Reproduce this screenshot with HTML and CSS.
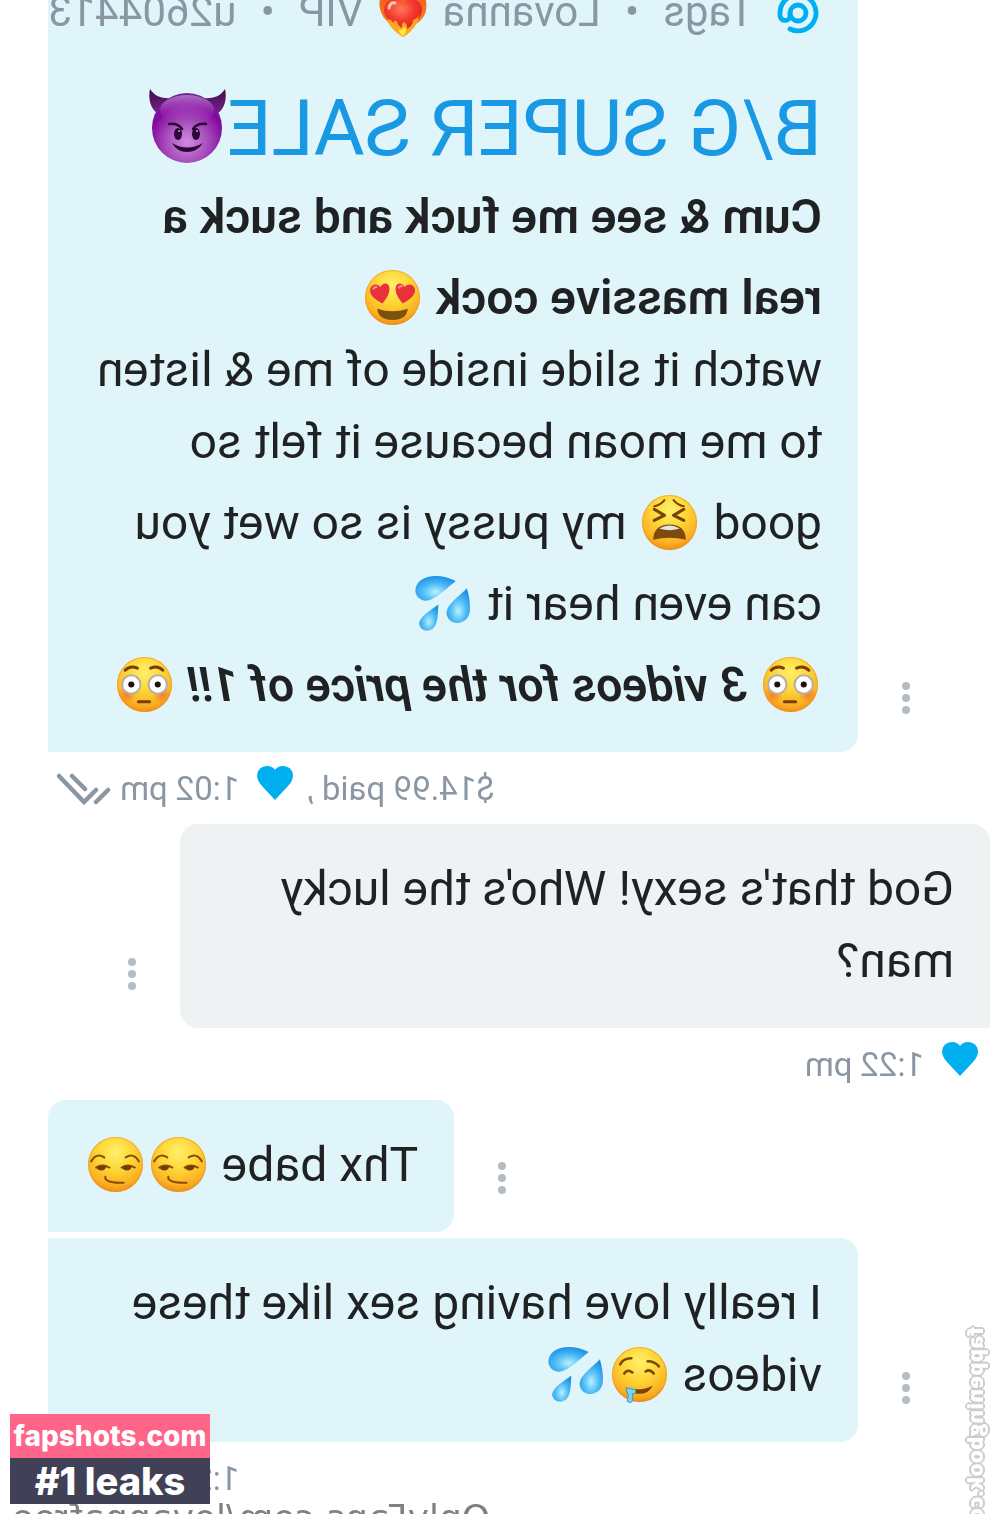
FILE: index.html
```html
<!DOCTYPE html>
<html lang="en">
<head>
<meta charset="utf-8">
<meta name="viewport" content="width=device-width, initial-scale=1">
<title>Messages</title>
<link rel="stylesheet" href="styles.css">
</head>
<body>
<svg class="sprite" aria-hidden="true">
  <defs>
    <radialGradient id="skin" cx="50%" cy="28%" r="74%">
      <stop offset="0" stop-color="#fff06a"/><stop offset=".45" stop-color="#fed535"/><stop offset=".8" stop-color="#fbb023"/><stop offset="1" stop-color="#ee8a17"/>
    </radialGradient>
    <radialGradient id="purple" cx="50%" cy="70%" r="72%">
      <stop offset="0" stop-color="#cf8be0"/><stop offset=".4" stop-color="#a850bd"/><stop offset=".75" stop-color="#84089f"/><stop offset="1" stop-color="#6b2b91"/>
    </radialGradient>
    <linearGradient id="shine" x1="0" y1="0" x2="0" y2="1">
      <stop offset="0" stop-color="#d7a0e4" stop-opacity=".6"/><stop offset="1" stop-color="#a03cb8" stop-opacity="0"/>
    </linearGradient>
    <linearGradient id="horn" x1="0" y1="0" x2="0" y2="1">
      <stop offset="0" stop-color="#3d0f49"/><stop offset="1" stop-color="#74208a"/>
    </linearGradient>
    <radialGradient id="water" cx="50%" cy="65%" r="65%">
      <stop offset="0" stop-color="#b9f0ff"/><stop offset=".5" stop-color="#4fbdf7"/><stop offset="1" stop-color="#1b8fe3"/>
    </radialGradient>
    <radialGradient id="red" cx="45%" cy="30%" r="70%">
      <stop offset="0" stop-color="#ff7a5c"/><stop offset=".5" stop-color="#f33a2c"/><stop offset="1" stop-color="#d81f1c"/>
    </radialGradient>
    <linearGradient id="flame" x1="0" y1="0" x2="0" y2="1">
      <stop offset="0" stop-color="#f4511e"/><stop offset=".6" stop-color="#f9761d"/><stop offset="1" stop-color="#fdc526"/>
    </linearGradient>
    <radialGradient id="blush"><stop offset="0" stop-color="#f4602b" stop-opacity=".65"/><stop offset="1" stop-color="#f4602b" stop-opacity="0"/></radialGradient>
  </defs>
  <symbol id="face" viewBox="0 0 56 56"><circle cx="28" cy="28" r="27" fill="url(#skin)"/><circle cx="28" cy="28" r="26.5" fill="none" stroke="#e98b1c" stroke-opacity=".5"/></symbol>
  <symbol id="heart-eyes" viewBox="0 0 56 56">
    <use href="#face"/>
    <path d="M18 34C11 30 5 26 6 20C7 14 14 14 16 18C18 13 25 13 25 19C25 25 22 29 18 34Z" fill="#e9313c"/>
    <path d="M38 34C34 29 31 25 31 19C31 13 38 13 40 18C42 14 49 14 50 20C51 26 45 30 38 34Z" fill="#e9313c"/>
    <path d="M9 20q1-3 4-2M34 19q1-3 4-2" stroke="#ff8a86" stroke-width="2" fill="none"/>
    <path d="M13 39Q28 44 43 39Q42 50 28 50Q14 50 13 39Z" fill="#7c5210"/>
  </symbol>
  <symbol id="tired" viewBox="0 0 56 56">
    <use href="#face"/>
    <g fill="none" stroke="#7a4305" stroke-linecap="round" stroke-linejoin="round">
      <path d="M13 12Q19 11 23 6M32 6Q36 11 42 12" stroke-width="2"/>
      <path d="M13 15L23 21L13 26M42 15L32 21L42 26" stroke-width="3"/>
    </g>
    <path d="M12 45C12 35 18 30 28 30C38 30 44 35 44 45Q28 41 12 45Z" fill="#7c4b0d"/>
    <path d="M18 34Q28 28 38 34Q28 37 18 34Z" fill="#dfe4ea"/>
  </symbol>
  <symbol id="sweat" viewBox="0 0 56 56">
    <g fill="url(#water)">
      <path d="M40 6C29 0 14-1 6 5C-2 11-1 21 6 24C15 29 24 19 40 6Z"/>
      <path d="M51 13C42 22 30 30 31 38C32 45 38 48 44 47C51 45 54 40 54 33C54 26 53 20 51 13Z"/>
      <path d="M23 29C15 35 4 41 4 48C5 54 11 56 15 54C23 51 22 39 23 29Z"/>
    </g>
  </symbol>
  <symbol id="flushed" viewBox="0 0 56 56">
    <use href="#face"/>
    <g fill="url(#blush)"><circle cx="11" cy="38" r="9"/><circle cx="45" cy="38" r="9"/></g>
    <g fill="#fff" stroke="#b3b0ac" stroke-width="2"><circle cx="15" cy="28" r="9"/><circle cx="41" cy="28" r="9"/></g>
    <circle cx="15" cy="28" r="3" fill="#20120a"/><circle cx="41" cy="28" r="3" fill="#20120a"/>
    <path d="M9 14Q14 9 21 12M34 12Q41 9 46 14M22 45H33" fill="none" stroke="#7a3c0b" stroke-width="3" stroke-linecap="round"/>
  </symbol>
  <symbol id="smirk" viewBox="0 0 56 56">
    <use href="#face"/>
    <g fill="none" stroke="#8a4f06" stroke-width="2" stroke-linecap="round">
      <path d="M4 25Q9 16 17 21M38 21Q46 16 51 25"/>
      <path d="M9 31Q15 27 22 31M34 31Q40 27 47 31"/>
      <path d="M18 40C17 45 26 46 36 46"/>
    </g>
    <path d="M9 31Q14 28 19 30Q18 34 14 34Q11 34 9 31ZM34 31Q39 28 44 30Q43 34 39 34Q36 34 34 31Z" fill="#6f3f05"/>
  </symbol>
  <symbol id="drool" viewBox="0 0 56 56">
    <use href="#face"/>
    <g fill="none" stroke="#7b4507" stroke-width="2.500" stroke-linecap="round">
      <path d="M9 18Q12 12 20 12M36 15Q43 15 47 20M13 27Q16 22 21 26M34 25Q38 22 42 27"/>
    </g>
    <path d="M14 41Q29 45 41 39Q37 47 28 47Q19 47 14 41Z" fill="#7b4507"/>
    <path d="M15 41L24 43V47H21V54Q19 57 16 54L17 48Q15 45 15 41Z" fill="#7fd3f2" stroke="#379fce"/>
  </symbol>
  <symbol id="devil" viewBox="0 0 78 74">
    <path d="M1 0C6 8 14 10 24 9L8 24C1 19-1 9 1 0ZM76 0C71 8 63 10 53 9L69 24C76 19 78 9 76 0Z" fill="url(#horn)"/>
    <circle cx="38" cy="39" r="35" fill="url(#purple)"/>
    <ellipse cx="38" cy="21" rx="27" ry="15" fill="url(#shine)"/>
    <g fill="#2d0638"><ellipse cx="29" cy="45" rx="4" ry="6"/><ellipse cx="47" cy="45" rx="4" ry="6"/>
    <path d="M23 54Q38 63 54 54Q48 63 38 63Q28 63 23 54Z"/></g>
    <path d="M20 35Q29 34 33 40M57 35Q48 34 44 40" fill="none" stroke="#2d0638" stroke-width="2.500" stroke-linecap="round"/>
    <circle cx="30" cy="42" r="1" fill="#c79bd2"/><circle cx="48" cy="42" r="1" fill="#c79bd2"/>
  </symbol>
  <symbol id="fire-heart" viewBox="0 0 48 52">
    <path d="M24 51C18 47 14 43 11 38C6 34 3 30 1 23C-1 14 3 9 3 4C7 7 8 10 10 8C14 5 13 1 13 0C19 4 20 9 24 12C28 9 31 4 34 0C35 4 35 7 39 10C41 8 42 6 43 4C47 10 48 18 47 24C46 30 42 35 37 38C34 43 30 48 24 51Z" fill="url(#flame)"/>
    <path d="M24 46C15 40 5 33 5 24C5 13 19 9 24 18C29 9 43 13 43 24C43 33 33 40 24 46Z" fill="url(#red)"/>
    <path d="M8 34Q12 32 14 37Q16 33 18 36Q20 41 23 42Q22 38 25 36Q29 39 28 43Q34 40 34 34Q38 33 40 29Q39 41 24 51Q12 44 8 34Z" fill="#fba81e"/>
    <path d="M19 43Q22 46 25 41Q30 43 24 50Q20 47 19 43Z" fill="#ffec45"/>
    <path d="M10 22Q11 16 16 17" fill="none" stroke="#ffc6b4" stroke-width="3" stroke-linecap="round"/>
  </symbol>
  <symbol id="at" viewBox="0 0 24 24"><g fill="none" stroke="#00aff0" stroke-width="2.400" stroke-linecap="round"><circle cx="12" cy="12" r="4"/><path d="M16 12v1.200a2.500 2.500 0 0 0 5 0V12a9 9 0 1 0-5 8"/></g></symbol>
  <symbol id="like" viewBox="0 0 36 34"><path d="M18 34L5 20C-5 9 2 0 10 0C14 0 17 2 18 4C19 2 22 0 26 0C34 0 41 9 31 20Z" fill="#00aff0"/></symbol>
  <symbol id="read" viewBox="0 0 54 32"><path d="M52 3L27 29L15 17M39 3L26 16M15 29L3 17" fill="none" stroke="#8a96a3" stroke-width="4.500" stroke-linecap="round"/></symbol>
  <symbol id="dots" viewBox="0 0 16 32"><g fill="#b4bcc4"><circle cx="8" cy="4" r="4"/><circle cx="8" cy="16" r="4"/><circle cx="8" cy="28" r="4"/></g></symbol>
</svg>

<main class="chat">
  <section class="row row-sent">
    <button class="more" type="button" aria-label="Message options"><svg><use href="#dots"/></svg></button>
    <article class="bubble sent wide tall-lines">
      <div class="tags">
        <svg class="at"><use href="#at"/></svg>
        <span>Tags</span><span class="sep">•</span><span>Lovanna <svg class="fire"><use href="#fire-heart"/></svg> VIP</span><span class="sep">•</span><span>u2604413</span>
      </div>
      <h1 class="title">B/G SUPER SALE<svg class="devil"><use href="#devil"/></svg></h1>
      <p class="text"><strong>Cum &amp; see me fuck and suck a<br>real massive cock <svg class="emoji"><use href="#heart-eyes"/></svg></strong><br>
      watch it slide inside of me &amp; listen<br>to me moan because it felt so<br>good <svg class="emoji"><use href="#tired"/></svg> my pussy is so wet you<br>can even hear it <svg class="emoji"><use href="#sweat"/></svg><br>
      <svg class="emoji"><use href="#flushed"/></svg> <strong><em>3 videos for the price of 1!!</em></strong> <svg class="emoji"><use href="#flushed"/></svg></p>
    </article>
  </section>
  <div class="meta meta-sent"><span>$14.99 paid ,</span><svg class="like"><use href="#like"/></svg><time>1:02 pm</time><svg class="read"><use href="#read"/></svg></div>

  <section class="row">
    <article class="bubble received wide"><p class="text">God that's sexy! Who's the lucky<br>man?</p></article>
    <button class="more" type="button" aria-label="Message options"><svg><use href="#dots"/></svg></button>
  </section>
  <div class="meta"><svg class="like"><use href="#like"/></svg><time>1:22 pm</time></div>

  <section class="row row-sent row-joined">
    <button class="more" type="button" aria-label="Message options"><svg><use href="#dots"/></svg></button>
    <article class="bubble sent"><p class="text">Thx babe <svg class="emoji"><use href="#smirk"/></svg><svg class="emoji"><use href="#smirk"/></svg></p></article>
  </section>
  <section class="row row-sent">
    <button class="more" type="button" aria-label="Message options"><svg><use href="#dots"/></svg></button>
    <article class="bubble sent wide follow"><p class="text">I really love having sex like these<br>videos <svg class="emoji"><use href="#drool"/></svg><svg class="emoji"><use href="#sweat"/></svg></p></article>
  </section>
  <div class="meta meta-sent meta-last"><time>1:22 pm</time><svg class="read"><use href="#read"/></svg></div>
  <p class="url">OnlyFans.com/lovannafree</p>
  <div class="side-mark">fappeningbook.com</div>
</main>
<aside class="badge"><div class="badge-site">fapshots.com</div><div class="badge-note">#1 leaks</div></aside>
</body>
</html>
```
FILE: styles.css
```css
* { box-sizing: border-box; }

body {
  margin: 0;
  height: 100vh;
  overflow: hidden;
  position: relative;
  background: #fff;
  color: #1f2123;
  font-family: Roboto, "Liberation Sans", sans-serif;
}

p, h1 { margin: 0; }

.sprite { position: absolute; width: 0; height: 0; }

.chat {
  position: relative;
  height: 100%;
  overflow: hidden;
  transform: scaleX(-1);
}

.row { display: flex; align-items: flex-end; padding: 0 48px 0 11px; }
.row-sent { justify-content: flex-end; }
.row-joined { margin-bottom: 6px; }

.bubble { padding: 29px 36px 31px; border-radius: 18px; }
.wide { width: 86%; }
.sent { background: #dff5fa; border-bottom-right-radius: 0; }
.received { background: #eff2f3; border-bottom-left-radius: 0; }
.follow { border-top-right-radius: 0; }

.text { font-size: 48px; line-height: 72px; white-space: nowrap; }
.text strong { font-weight: 600; }

.emoji {
  width: 57px;
  height: 57px;
  margin: 0 3px;
  vertical-align: -12px;
  transform: scaleX(-1);
}
.tall-lines {
  padding-top: 0;
  border-top-left-radius: 0;
  border-top-right-radius: 0;
}
.tall-lines .emoji { margin-top: 16px; }

.tags {
  display: flex;
  align-items: center;
  height: 40px;
  margin: -8px -36px 0 0;
  white-space: nowrap;
  color: #8a96a3;
  font-size: 42px;
  line-height: 40px;
}
.at { width: 48px; height: 48px; flex: none; margin: 2px 20px 0 0; }
.sep { width: 63px; text-align: center; }
.fire { width: 48px; height: 52px; margin: 0 5px; vertical-align: -12px; transform: scaleX(-1); }

.title {
  padding: 57px 0 16px;
  color: #1998e3;
  font-size: 78px;
  font-weight: 400;
  line-height: 72px;
  white-space: nowrap;
}
.devil { width: 78px; height: 74px; vertical-align: -8px; transform: scaleX(-1); }

.more {
  flex: none;
  width: 16px;
  height: 32px;
  margin: 0 40px 38px;
  padding: 0;
  border: 0;
  background: none;
}
.more svg { display: block; width: 16px; height: 32px; }

.meta {
  display: flex;
  align-items: center;
  height: 72px;
  padding: 2px 57px 0 23px;
  color: #8a96a3;
  font-size: 33px;
  line-height: 70px;
}
.meta-sent { justify-content: flex-end; }
.like { width: 36px; height: 34px; margin: 0 18px 12px 0; }
span + .like { margin-left: 14px; }
.read { width: 54px; height: 32px; margin-left: 9px; }
.meta-last { height: 54px; line-height: 54px; padding-top: 20px; }

.url {
  padding-right: 12px;
  color: #808080;
  font: 36px/44px "DejaVu Sans", sans-serif;
  text-align: right;
}

.side-mark {
  position: absolute;
  left: 12px;
  bottom: -28px;
  writing-mode: vertical-rl;
  color: #fff;
  font: 800 21px/28px "Open Sans", sans-serif;
  text-shadow: 2px 0 #ccc, -2px 0 #ccc, 0 2px #ccc, 0 -2px #ccc, 1px 1px #ccc, -1px -1px #ccc, 1px -1px #ccc, -1px 1px #ccc;
}

.badge {
  position: absolute;
  left: 10px;
  bottom: 10px;
  width: 200px;
  color: #fff;
  font-family: Inter, sans-serif;
  font-weight: 800;
  text-align: center;
}
.badge-site { background: #ff6589; font-size: 28px; line-height: 44px; }
.badge-note { background: #404156; font-size: 38px; line-height: 46px; }
```
